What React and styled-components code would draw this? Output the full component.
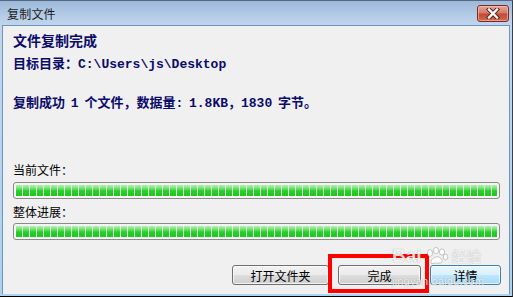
import React from 'react';
import styled, { createGlobalStyle, css } from 'styled-components';

const GlobalStyle = createGlobalStyle`
    html, body {
        margin: 0;
        padding: 0;
        background: #ffffff;
    }
    * {
        box-sizing: border-box;
    }
`

const CJK = `"Noto Sans CJK SC", "Liberation Sans", sans-serif`;
const MONO = `"Liberation Mono", "Noto Sans CJK SC", monospace`;

const App = () => {
    return (<>
        <GlobalStyle />
        <Window>
            <TitleBar>
                <Caption>复制文件</Caption>
                <CloseButton aria-label="关闭">
                    <svg width="16" height="11" viewBox="0 0 16 11">
                        <path d="M4 1.5 L12 9.5 M12 1.5 L4 9.5" stroke="#5a1c16" strokeWidth="4.2" strokeLinecap="square" />
                        <path d="M4 1.5 L12 9.5 M12 1.5 L4 9.5" stroke="#ffffff" strokeWidth="2.4" strokeLinecap="square" />
                    </svg>
                </CloseButton>
            </TitleBar>

            <Content>
                <Heading>文件复制完成</Heading>
                <InfoLine $top={9}>目标目录：C:\Users\js\Desktop</InfoLine>
                <InfoLine $top={23}>复制成功 1 个文件，数据量: 1.8KB，1830 字节。</InfoLine>

                <Label $top={50}>当前文件：</Label>
                <Track $top={4}><Fill style={{ width: '100%' }} /></Track>

                <Label $top={5}>整体进展：</Label>
                <Track $top={3}><Fill style={{ width: '100%' }} /></Track>

                <ButtonRow>
                    <Button $width={97}>打开文件夹</Button>
                    <Button $width={83}>完成</Button>
                    <Button $width={71} $default>详情</Button>
                </ButtonRow>
            </Content>

            <Highlight />
            <Watermark>
                <WmTop>
                    <span>Bai</span>
                    <svg width="26" height="18" viewBox="0 0 26 18">
                        <g fill="rgba(255,255,255,0.9)" stroke="rgba(0,0,0,0.25)" strokeWidth="0.8">
                            <ellipse cx="6" cy="6" rx="2.6" ry="3.4" />
                            <ellipse cx="12" cy="3.6" rx="2.6" ry="3.2" />
                            <ellipse cx="18" cy="5" rx="2.6" ry="3.2" />
                            <ellipse cx="21.5" cy="10" rx="2.3" ry="2.8" />
                            <path d="M7 15 C8 9 16 8 18 13 C19 17 14 16 12 16 C10 16 6 18 7 15 Z" />
                        </g>
                    </svg>
                    <WmCn>经验</WmCn>
                </WmTop>
                <WmUrl>jingyan.baidu.com</WmUrl>
            </Watermark>
        </Window>
    </>);
}

export default App;

const Window = styled.div`
    position: relative;
    width: 513px;
    height: 297px;
    display: flex;
    flex-direction: column;
    padding: 0 2px 2px 2px;
    background: linear-gradient(to bottom, #9db8da 0px, #b4cbe6 14px, #c2d6ee 25px, #a9d3ee 100%);
    border-top: 1px solid #56687f;
    border-right: 1px solid #3b3f46;
    border-bottom: 1px solid #000000;
`

const TitleBar = styled.div`
    height: 24px;
    display: flex;
    align-items: center;
    padding-left: 5px;
`

const Caption = styled.div`
    font-family: ${CJK};
    font-size: 12px;
    color: #1c1c1c;
    letter-spacing: 0.2px;
`

const CloseButton = styled.button`
    margin-left: auto;
    margin-right: 1px;
    width: 32px;
    height: 17px;
    padding: 0;
    display: flex;
    align-items: center;
    justify-content: center;
    border: 1px solid #7b2a22;
    border-radius: 3px;
    background: linear-gradient(to bottom, #e6a79a 0%, #d47a68 45%, #c24a35 55%, #cf6a50 100%);
    box-shadow: inset 0 0 0 1px rgba(255, 210, 200, 0.5);
`

const Content = styled.div`
    flex: 1;
    display: flex;
    flex-direction: column;
    align-items: flex-start;
    background: #f0f0f0;
    border: 1px solid #6f94c2;
    border-bottom: none;
    padding: 6px 8px 0 10px;
`

const Heading = styled.div`
    font-family: ${CJK};
    font-size: 14px;
    font-weight: 700;
    line-height: 16px;
    color: #0b0b6b;
`

const InfoLine = styled.div`
    margin-top: ${props => props.$top}px;
    font-family: ${MONO};
    font-size: 13px;
    font-weight: 700;
    line-height: 16px;
    color: #0b0b6b;
    white-space: pre;
    word-spacing: -2px;
`

const Label = styled.div`
    margin-top: ${props => props.$top}px;
    font-family: ${CJK};
    font-size: 12px;
    line-height: 16px;
    color: #000000;
`

const Track = styled.div`
    margin-top: ${props => props.$top}px;
    align-self: stretch;
    margin-right: 1px;
    height: 17px;
    padding: 2px;
    border: 1px solid #8a8a8a;
    border-radius: 3px;
    background: #f4f4f4;
`

const Fill = styled.div`
    height: 100%;
    background:
        repeating-linear-gradient(to right, transparent 0 6px, #e4f4e4 6px 7px),
        linear-gradient(to bottom, #b6f0b6 0%, #6fe36f 30%, #28cf28 55%, #22c422 100%);
`

const ButtonRow = styled.div`
    margin-top: 25px;
    align-self: stretch;
    display: flex;
    justify-content: flex-end;
    gap: 9px;
`

const Button = styled.button`
    width: ${props => props.$width}px;
    height: 20px;
    padding: 0;
    font-family: ${CJK};
    font-size: 12px;
    color: #000000;
    border: 1px solid #707070;
    border-radius: 3px;
    background: linear-gradient(to bottom, #f2f2f2 0%, #ebebeb 48%, #dddddd 52%, #cfcfcf 100%);
    box-shadow: inset 0 0 0 1px rgba(255, 255, 255, 0.7);

    ${props => props.$default && css`
        border-color: #3c7fb1;
        background: linear-gradient(to bottom, #eaf6fd 0%, #d9f0fc 48%, #bee6fd 52%, #a7d9f5 100%);
    `}
`

const Highlight = styled.div`
    position: absolute;
    left: 328px;
    top: 253px;
    width: 101px;
    height: 39px;
    border: 4px solid #ff0000;
    pointer-events: none;
`

const Watermark = styled.div`
    position: absolute;
    left: 392px;
    top: 244px;
    display: flex;
    flex-direction: column;
    pointer-events: none;
    color: rgba(255, 255, 255, 0.85);
    text-shadow: 0 0 1px rgba(0, 0, 0, 0.35);
`

const WmTop = styled.div`
    display: flex;
    align-items: center;
    gap: 2px;
    font-family: "Liberation Sans", sans-serif;
    font-size: 19px;
    font-weight: 700;
    line-height: 22px;
`

const WmCn = styled.span`
    font-family: ${CJK};
    font-size: 15px;
    font-weight: 400;
`

const WmUrl = styled.div`
    margin-top: 8px;
    font-family: "Liberation Sans", sans-serif;
    font-size: 11px;
    line-height: 12px;
    letter-spacing: 0.2px;
`
